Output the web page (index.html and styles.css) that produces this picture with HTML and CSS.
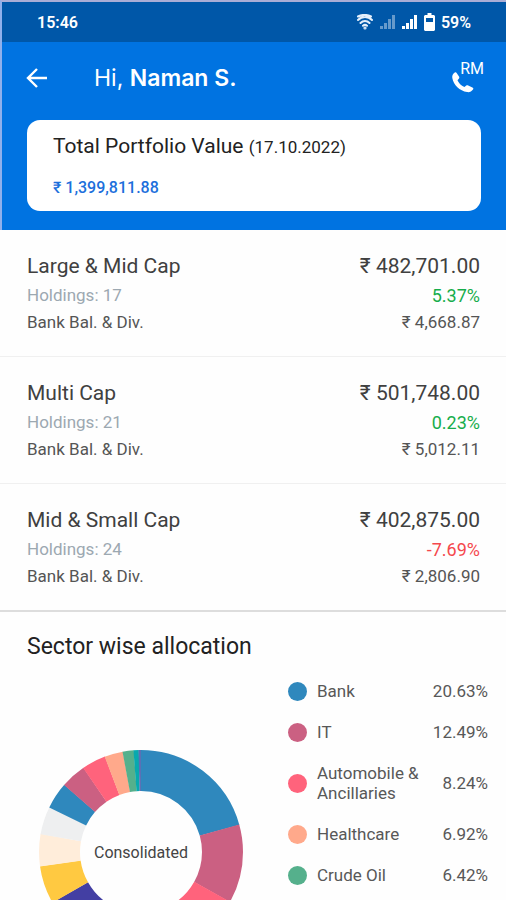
FILE: index.html
```html
<!DOCTYPE html>
<html lang="en">
<head>
<meta charset="utf-8">
<meta name="viewport" content="width=device-width, initial-scale=1">
<title>Portfolio</title>
<link rel="stylesheet" href="styles.css">
</head>
<body>
<header class="top">
  <div class="status">
    <span>15:46</span>
    <div class="status-icons">
      <svg width="18" height="16" viewBox="0 0 18 16" fill="none" stroke="#e4effb" stroke-width="2" stroke-linecap="round"><path d="M2 6C6 2 12 2 16 6M4.500 9c2.600-2.700 6.400-2.700 9 0M7 11.800c1.300-1.200 2.700-1.200 4 0M2 2.500c4-2 9-2 13 0"/><circle cx="9" cy="14" r=".6"/></svg>
      <svg class="weak" width="16" height="14" viewBox="0 0 16 14" fill="#fff"><path d="M0 11h3v3H0zM4 8h3v6H4zM8 4h3v10H8zM12 0h3v14h-3z"/></svg>
      <svg width="16" height="14" viewBox="0 0 16 14" fill="#fff"><path d="M0 11h3v3H0zM4 8h3v6H4zM8 4h3v10H8zM12 0h3v14h-3z"/></svg>
      <svg width="11" height="18" viewBox="0 0 11 18"><path fill="#fff" fill-rule="evenodd" d="M3.500 0h4v2H10l1 1v14l-1 1H1l-1-1V3l1-1h2.500zM2 5v4h7V5z"/></svg>
      <span>59%</span>
    </div>
  </div>
  <div class="bar">
    <button class="icon-button" type="button" aria-label="Back">
      <svg width="22" height="20" viewBox="0 0 22 20" fill="none" stroke="#fff" stroke-width="2.400"><path d="M21 10H2M11 1l-9 9 9 9"/></svg>
    </button>
    <h1 class="greeting">Hi, <strong>Naman S.</strong></h1>
    <button class="icon-button call" type="button">
      <svg width="22" height="21" viewBox="0 0 22 21" fill="#fff"><path d="M2.500.7C3.300.1 4.300.3 4.800 1.200L7 4.600c.5.800.4 1.600-.2 2.200L5.500 8.200c1.300 3 3.500 5.200 6.900 6.700l1.900-1.300c.6-.4 1.300-.4 1.900 0l4.200 1.800c1.100.5 1.200 1.400.6 2.200-1.400 2-3.500 2.900-5.900 2.500C7.700 18.900 1.500 13 .3 6 0 3.700.7 2 2.500.7z"/></svg>
      <span class="rm">RM</span>
    </button>
  </div>
  <section class="total">
    <h2 class="total-title">Total Portfolio Value <small>(17.10.2022)</small></h2>
    <p class="total-value">₹ 1,399,811.88</p>
  </section>
</header>
<main>
  <section class="fund">
    <h2 class="fund-name">Large &amp; Mid Cap</h2><span class="fund-value">₹ 482,701.00</span>
    <span class="holdings">Holdings: 17</span><span class="change">5.37%</span>
    <span class="bank">Bank Bal. &amp; Div.</span><span class="bank-value">₹ 4,668.87</span>
  </section>
  <section class="fund">
    <h2 class="fund-name">Multi Cap</h2><span class="fund-value">₹ 501,748.00</span>
    <span class="holdings">Holdings: 21</span><span class="change">0.23%</span>
    <span class="bank">Bank Bal. &amp; Div.</span><span class="bank-value">₹ 5,012.11</span>
  </section>
  <section class="fund">
    <h2 class="fund-name">Mid &amp; Small Cap</h2><span class="fund-value">₹ 402,875.00</span>
    <span class="holdings">Holdings: 24</span><span class="change loss">-7.69%</span>
    <span class="bank">Bank Bal. &amp; Div.</span><span class="bank-value">₹ 2,806.90</span>
  </section>
  <section class="sectors">
    <h2 class="sectors-title">Sector wise allocation</h2>
    <div class="allocation">
      <div class="chart">
        <svg class="donut" viewBox="0 0 204 204" aria-hidden="true">
          <g fill="none" stroke-width="41" transform="rotate(-90 102 102)">
            <circle cx="102" cy="102" r="81.500" pathLength="100" stroke="#2f88bd" stroke-dasharray="20.700 100"/>
            <circle cx="102" cy="102" r="81.500" pathLength="100" stroke="#cb6082" stroke-dasharray="12.550 100" stroke-dashoffset="-20.630"/>
            <circle cx="102" cy="102" r="81.500" pathLength="100" stroke="#ff637c" stroke-dasharray="8.300 100" stroke-dashoffset="-33.120"/>
            <circle cx="102" cy="102" r="81.500" pathLength="100" stroke="#ffa98b" stroke-dasharray="7 100" stroke-dashoffset="-41.360"/>
            <circle cx="102" cy="102" r="81.500" pathLength="100" stroke="#55b08c" stroke-dasharray="6.500 100" stroke-dashoffset="-48.280"/>
            <circle cx="102" cy="102" r="81.500" pathLength="100" stroke="#433fa3" stroke-dasharray="12.050 100" stroke-dashoffset="-54.700"/>
            <circle cx="102" cy="102" r="81.500" pathLength="100" stroke="#ffc941" stroke-dasharray="6.050 100" stroke-dashoffset="-66.700"/>
            <circle cx="102" cy="102" r="81.500" pathLength="100" stroke="#ffedda" stroke-dasharray="5.150 100" stroke-dashoffset="-72.700"/>
            <circle cx="102" cy="102" r="81.500" pathLength="100" stroke="#eeeff0" stroke-dasharray="4.450 100" stroke-dashoffset="-77.800"/>
            <circle cx="102" cy="102" r="81.500" pathLength="100" stroke="#2f88bd" stroke-dasharray="4.250 100" stroke-dashoffset="-82.200"/>
            <circle cx="102" cy="102" r="81.500" pathLength="100" stroke="#cb6082" stroke-dasharray="4.050 100" stroke-dashoffset="-86.400"/>
            <circle cx="102" cy="102" r="81.500" pathLength="100" stroke="#ff637c" stroke-dasharray="3.850 100" stroke-dashoffset="-90.400"/>
            <circle cx="102" cy="102" r="81.500" pathLength="100" stroke="#ffa98b" stroke-dasharray="2.950 100" stroke-dashoffset="-94.200"/>
            <circle cx="102" cy="102" r="81.500" pathLength="100" stroke="#55b08c" stroke-dasharray="1.750 100" stroke-dashoffset="-97.100"/>
            <circle cx="102" cy="102" r="81.500" pathLength="100" stroke="#08a9ae" stroke-dasharray=".850 100" stroke-dashoffset="-98.800"/>
            <circle cx="102" cy="102" r="81.500" pathLength="100" stroke="#5b70b5" stroke-dasharray=".400 100" stroke-dashoffset="-99.600"/>
          </g>
        </svg>
        <span class="chart-label">Consolidated</span>
      </div>
      <ul class="legend">
        <li><i class="dot blue"></i><span>Bank</span><span class="share">20.63%</span></li>
        <li><i class="dot mauve"></i><span>IT</span><span class="share">12.49%</span></li>
        <li><i class="dot pink"></i><span>Automobile &amp; Ancillaries</span><span class="share">8.24%</span></li>
        <li><i class="dot peach"></i><span>Healthcare</span><span class="share">6.92%</span></li>
        <li><i class="dot green"></i><span>Crude Oil</span><span class="share">6.42%</span></li>
      </ul>
    </div>
  </section>
</main>
</body>
</html>
```

FILE: styles.css
```css
* { box-sizing: border-box; }
body {
  margin: 0;
  height: 100vh;
  overflow: hidden;
  background: #fefefe;
  color: #404040;
  font-family: Roboto, "Liberation Sans", sans-serif;
  font-size: 17px;
}
h1, h2, p, ul { margin: 0; padding: 0; font-weight: 400; }
svg { display: block; }

.top {
  border-top: 2px solid #a9add6;
  border-left: 2px solid #8fb0ec;
  background: #0073e1;
  padding-bottom: 19px;
}
.status {
  display: flex;
  justify-content: space-between;
  align-items: center;
  height: 40px;
  padding: 0 35px;
  background: #0057a8;
  color: #fff;
  font-size: 16px;
  font-weight: 600;
}
.status-icons { display: flex; align-items: center; gap: 6px; }
.weak { opacity: .4; }

.bar {
  display: flex;
  align-items: center;
  height: 72px;
  padding: 0 22px 0 24px;
}
.icon-button {
  display: flex;
  border: 0;
  padding: 0;
  background: none;
  color: #fff;
  font: inherit;
}
.greeting {
  flex: 1;
  padding-left: 46px;
  color: #fff;
  font-family: Inter, sans-serif;
  font-size: 23px;
}
.greeting strong { font-weight: 600; }
.call { position: relative; width: 32px; padding-top: 8px; font-size: 16px; }
.rm { position: absolute; top: -5px; right: 0; line-height: 20px; }

.total {
  margin: 6px 25px 0;
  padding: 13px 26px 11px;
  border-radius: 13px;
  background: #fff;
}
.total-title { color: #222; font-size: 21px; line-height: 26px; }
.total-title small { font-size: 17px; }
.total-value {
  margin-top: 16px;
  color: #1c6fdc;
  font-size: 16px;
  font-weight: 500;
  line-height: 24px;
}

.fund {
  display: grid;
  grid-template-columns: 1fr auto;
  align-items: center;
  padding: 20px 26px 20px 27px;
  border-bottom: 1px solid #f0f0f0;
  line-height: 27px;
}
.fund:has(+ .sectors) { border-bottom: 0; }
.fund > :nth-child(even) { text-align: right; }
.fund-name, .fund-value { font-size: 21px; line-height: 32px; }
.holdings { color: #9ca8b1; }
.change { color: #16ad4b; font-size: 18px; }
.loss { color: #f5484d; }
.bank, .bank-value { color: #555; }

.sectors { padding: 19px 18px 0 27px; border-top: 2px solid #ddd; }
.sectors-title { color: #222; font-size: 23px; line-height: 32px; }
.allocation {
  display: grid;
  grid-template-columns: 228px 1fr;
  gap: 33px;
  align-items: start;
}
.chart {
  display: grid;
  place-items: center;
  margin-top: 87px;
}
.chart > * { grid-area: 1 / 1; }
.donut { width: 204px; }
.chart-label { color: #444; font-size: 16px; }
.legend {
  display: grid;
  gap: 21px;
  margin-top: 18px;
  list-style: none;
  color: #585858;
  line-height: 20px;
}
.legend li {
  display: grid;
  grid-template-columns: 19px 1fr auto;
  gap: 10px;
  align-items: center;
}
.dot { width: 19px; height: 19px; border-radius: 50%; }
.blue { background: #2f88bd; }
.mauve { background: #cb6082; }
.pink { background: #ff637c; }
.peach { background: #ffa98b; }
.green { background: #55b08c; }
```
